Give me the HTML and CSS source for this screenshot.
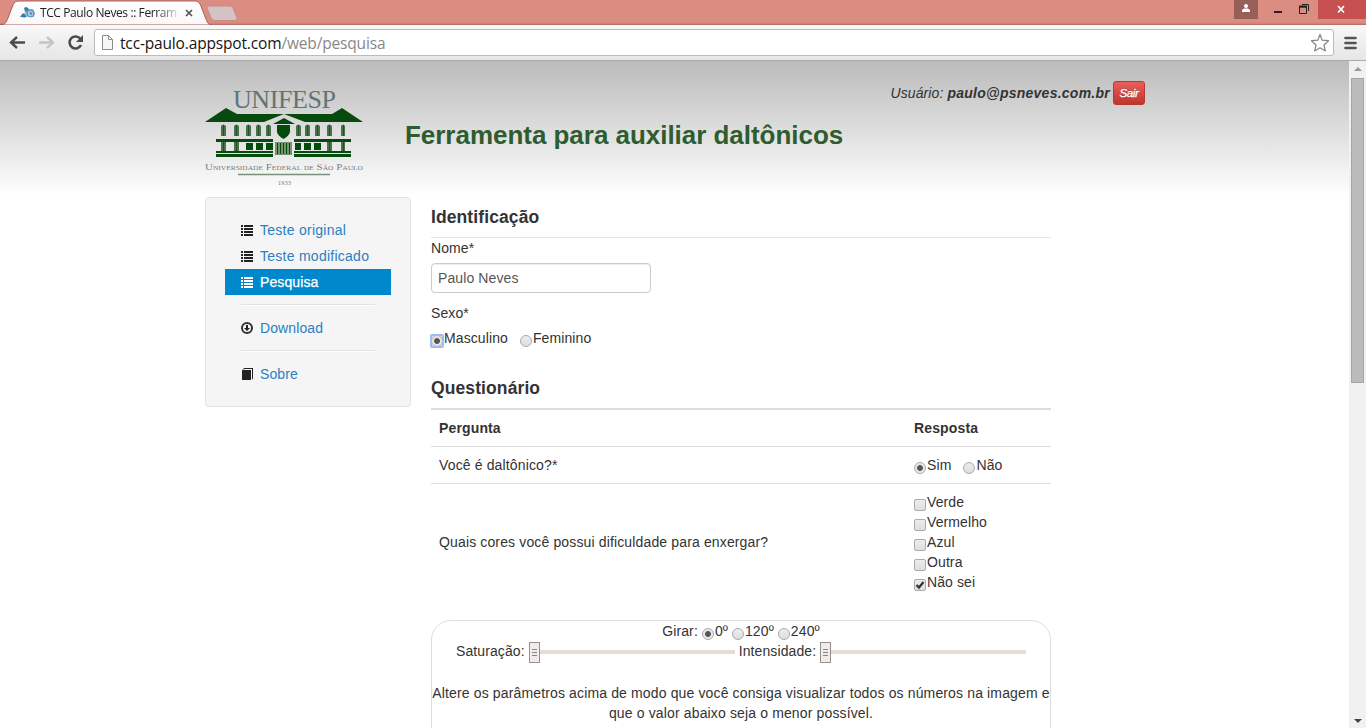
FILE: index.html
```html
<!DOCTYPE html>
<html lang="pt-BR">
<head>
<meta charset="utf-8">
<title>TCC Paulo Neves :: Ferramenta</title>
<link rel="stylesheet" href="styles.css">
</head>
<body>
<svg width="0" height="0" class="defs">
  <defs>
    <symbol id="list" viewBox="0 0 12 11"><path d="M0 0h2v2H0zM3 0h9v2H3zM0 3h2v2H0zM3 3h9v2H3zM0 6h2v2H0zM3 6h9v2H3zM0 9h2v2H0zM3 9h9v2H3z"/></symbol>
  </defs>
</svg>
<header class="browser">
  <div class="tabstrip">
    <svg class="tabs" width="250" height="25" viewBox="0 0 250 25">
      <defs><linearGradient id="tabfill" x2="0" y2="1"><stop offset="0" stop-color="#fff"/><stop offset="1" stop-color="#f9f8f8"/></linearGradient></defs>
      <path d="M0 25C5 25 6 23 8 18L13 5C14.500 2 16 1 19 1H194C198 1 199 2 200.500 5L206 19C207.500 23 208 24.500 212 25Z" fill="url(#tabfill)" stroke="#a6615a"/>
      <path d="M208.500 6H229Q232 6 233 8L237 18Q238 20.500 235 20.500H215Q212 20.500 211 18L207 8Q206.500 6 208.500 6Z" fill="#d4c3c5" stroke="#c98a82"/>
      <path d="M21 17L23 14L25 13L24 9L27 7L29 9L33 9L35 13L34 17H29L27 16L25 18Z" fill="#8bb9d8"/><path d="M20 17L23 13L27 17ZM24 8L26 7L29 9L26 12Z" fill="#3479aa"/><circle cx="30.500" cy="13.500" r="3.500" fill="#a5cbe2" stroke="#4e8ab4"/><circle cx="31" cy="13.500" r="1.300" fill="#4e8ab4"/>
      <path d="M186 10l6 6m0-6l-6 6" stroke="#555" stroke-width="1.700"/>
    </svg>
    <span class="tab-title">TCC Paulo Neves :: Ferram</span>
    <svg class="window-buttons" width="132" height="19" viewBox="0 0 132 19">
      <path fill="#985f59" d="M0 0h24v19H0z"/><circle cx="12" cy="6" r="2" fill="#fff"/><path d="M8 12V10L10 8.500H14L16 10V12Z" fill="#fff"/>
      <path fill="#2a2220" d="M40 11h8v2h-8z"/><path d="M65.500 7v6.500h7V7zM68 4.500h6.500V11" fill="none" stroke="#2a2220"/><path d="M65 6.500h8" stroke="#2a2220" stroke-width="2"/>
      <path fill="#c75050" d="M84 0h48v19H84z"/><path d="M104 6l6 6.500m0-6.500l-6 6.500" stroke="#fff" stroke-width="1.700"/>
    </svg>
  </div>
  <div class="toolbar">
    <svg class="nav-icons" width="94" height="35" viewBox="0 0 94 35" fill="none">
      <path d="M25 17.500H11M17 12L11 17.500L17 23" stroke="#4c4c4c" stroke-width="2.400"/>
      <path d="M39 17.500H53M47 12L53 17.500L47 23" stroke="#c5c5c5" stroke-width="2.400"/>
      <path d="M80.500 14A6 6 0 1 0 81 20" stroke="#4c4c4c" stroke-width="2.600"/><path d="M83 10V17H76Z" fill="#4c4c4c"/>
    </svg>
    <div class="address">
      <svg width="13" height="16" viewBox="0 0 13 16"><path d="M1.500 .5H7.500L11.500 4.500V14.500H1.500ZM7.500 .5V4.500H11.500" fill="#f7f7f7" stroke="#8b8b8b"/></svg>
      <span class="url"><b>tcc-paulo.appspot.com</b>/web/pesquisa</span>
      <svg class="star" width="20" height="20" viewBox="0 0 20 20"><path d="M10 1.500L12.200 7.200L18.500 7.700L14 12L15.300 18L10 14.800L4.700 18L6 12L1.500 7.700L7.800 7.200Z" fill="#fff" stroke="#858585" stroke-width="1.200" stroke-linejoin="round"/></svg>
    </div>
    <svg class="menu" width="13" height="14" viewBox="0 0 13 14"><path d="M1.500 2h10M1.500 7h10M1.500 12h10" stroke="#555" stroke-width="2.700" stroke-linecap="round"/></svg>
  </div>
</header>
<div class="viewport">
  <div class="page">
    <div class="container">
      <header class="banner">
        <svg class="logo" width="160" height="98" viewBox="205 89 160 98" font-family="Liberation Serif, serif">
          <text x="233" y="108" font-size="26" textLength="103" lengthAdjust="spacing" fill="#607573" class="wordmark">UNIFESP</text>
          <g fill="#064b0d">
            <path d="M205 122L226 108L237 114H332L342 108L363 122H305L284 114L264 122Z"/>
            <path d="M273 124L284 118L295 124ZM277 125H290V132Q289 136 283.500 139Q278 136 277 132Z"/>
            <path d="M216 139H273V142H216ZM294 139H351V142H294ZM216 151H273V157H216ZM294 151H351V157H294Z"/>
            <path d="M246 143h7v7h-7zM256 143h7v7h-7zM266 143h7v7h-7zM295 143h6v7h-6zM304 143h7v7h-7zM314 143h7v7h-7z"/>
          </g>
          <path d="M216 153.500H351M274 140.500H293" stroke="#e0e0e0"/><path d="M275 142H292V155H275Z" fill="#73946f"/>
          <path d="M277.500 143v11M280.500 143v11M283.500 143v11M286.500 143v11M289.500 143v11" stroke="#064b0d"/>
          <g fill="#477349"><path d="M221 136V126Q223 123 226 126V136ZM234 136V126Q236 123 239 126V136ZM246 136V126Q248 123 251 126V136ZM256 136V126Q258 123 261 126V136ZM266 136V126Q268 123 271 126V136ZM296 136V126Q298 123 301 126V136ZM305 136V126Q308 123 310 126V136ZM315 136V126Q317 123 320 126V136ZM327 136V126Q329 123 332 126V136ZM341 136V126Q343 123 345 126V136ZM221 142h5v9h-5zM234 142h5v9h-5zM327 142h5v9h-5zM341 142h4v9h-4z"/></g>
          <path d="M223.500 125v11m0 6v9M236.500 125v11m0 6v9M248.500 125v11M258.500 125v11M268.500 125v11M298.500 125v11M307.500 125v11M317.500 125v11M329.500 125v11m0 6v9M343.500 125v11m0 6v9" stroke="#244f2a"/>
          <text x="205" y="169.500" font-size="8.800" textLength="158" lengthAdjust="spacingAndGlyphs" fill="#747f7f" class="smallcaps">Universidade Federal de São Paulo</text>
          <path d="M238 174.500H330" stroke="#78917d" stroke-width="1.300"/>
          <text x="278" y="185" font-size="6" textLength="13" fill="#777">1933</text>
        </svg>
        <h1>Ferramenta para auxiliar daltônicos</h1>
        <div class="user">Usuário: <strong>paulo@psneves.com.br</strong><a class="exit">Sair</a></div>
      </header>
      <div class="columns">
        <nav class="sidebar">
          <a class="test"><svg width="12" height="11"><use href="#list"/></svg>Teste original</a>
          <a class="test"><svg width="12" height="11"><use href="#list"/></svg>Teste modificado</a>
          <a class="active"><svg width="12" height="11"><use href="#list"/></svg>Pesquisa</a>
          <hr>
          <a><svg width="12" height="12" viewBox="0 0 12 12"><circle cx="6" cy="6" r="5" fill="none" stroke="#333" stroke-width="2"/><path d="M5 3h2v3h2L6 9L3 6h2z"/></svg>Download</a>
          <hr>
          <a><svg width="12" height="12" viewBox="0 0 12 12"><path d="M1 2.500L3 0H12V10.500L11 11.500V1H3L2 2H10V12H1Z"/></svg>Sobre</a>
        </nav>
        <main>
          <h2 class="legend">Identificação</h2>
          <label>Nome*</label>
          <input class="name" value="Paulo Neves">
          <label>Sexo*</label>
          <div class="choices"><i class="radio on focus"></i><span>Masculino</span><i class="radio"></i><span>Feminino</span></div>
          <h2>Questionário</h2>
          <div class="table">
            <div class="row head"><span>Pergunta</span><span>Resposta</span></div>
            <div class="row"><span>Você é daltônico?*</span><div class="choices"><i class="radio on"></i><span>Sim</span><i class="radio"></i><span>Não</span></div></div>
            <div class="row tall"><span>Quais cores você possui dificuldade para enxergar?</span>
              <div>
                <div class="choices"><i class="check"></i><span>Verde</span></div>
                <div class="choices"><i class="check"></i><span>Vermelho</span></div>
                <div class="choices"><i class="check"></i><span>Azul</span></div>
                <div class="choices"><i class="check"></i><span>Outra</span></div>
                <div class="choices"><i class="check"><svg width="10" height="10" viewBox="0 0 10 10"><path d="M1.500 5L4 7.500L8.500 2" fill="none" stroke="#333" stroke-width="2.300"/></svg></i><span>Não sei</span></div>
              </div>
            </div>
          </div>
          <section class="panel">
            <div class="rotate"><span>Girar:</span><i class="radio on"></i><span>0º</span><i class="radio"></i><span>120º</span><i class="radio"></i><span>240º</span></div>
            <div class="sliders"><span class="sat">Saturação:</span><div class="slider"><i></i></div><span class="int">Intensidade:</span><div class="slider"><i></i></div></div>
            <p>Altere os parâmetros acima de modo que você consiga visualizar todos os números na imagem e<br>que o valor abaixo seja o menor possível.</p>
          </section>
        </main>
      </div>
    </div>
  </div>
  <aside class="scrollbar"><i class="arrow up"></i><div class="thumb"></div><i class="arrow down"></i></aside>
</div>
</body>
</html>
```
FILE: styles.css
```css
* { box-sizing: border-box; }
body { margin: 0; width: 1366px; height: 728px; overflow: hidden; background: #fff; color: #333; font: 14px/20px "Liberation Sans", Arial, sans-serif; letter-spacing: .1px; }
svg { display: block; flex: none; }
.defs { position: absolute; }
.browser { height: 61px; letter-spacing: 0; }
.tabstrip { position: relative; display: flex; justify-content: space-between; height: 25px; background: linear-gradient(#db8d82 0, #db8d82 22px, #cc8077 24px, #a6615a 25px); }
.tab-title { position: absolute; left: 40px; top: 3px; width: 144px; white-space: nowrap; font: 12px/20px "Open Sans", sans-serif; letter-spacing: -.4px; color: #222; -webkit-mask-image: linear-gradient(90deg, #000 80%, transparent 98%); mask-image: linear-gradient(90deg, #000 80%, transparent 98%); }
.toolbar { display: flex; height: 36px; background: linear-gradient(#f9f8f8, #e6e6e6); border-bottom: 1px solid #a9a9a9; }
.address { display: flex; align-items: center; width: 1240px; height: 27px; margin-top: 4px; padding: 0 3px 0 6px; background: #fff; border: 1px solid #bbb; border-radius: 3px; }
.url { margin-left: 6px; flex: 1; font: 15.5px/24px "Open Sans", sans-serif; letter-spacing: -.16px; color: #888; white-space: nowrap; }
.url b { font-weight: 400; color: #151515; }
.menu { margin: 11px 0 0 10px; }
.viewport { display: flex; height: 667px; }
.page { width: 1349px; overflow: hidden; background: linear-gradient(#bbb 0, #fff 135px); }
.container { width: 940px; margin-left: 205px; }
.banner { display: flex; height: 136px; }
.logo { margin-top: 28px; letter-spacing: 0; overflow: visible; }
.smallcaps { font-variant: small-caps; }
h1 { margin: 54px 0 0 40px; width: 460px; font-size: 26px; line-height: 40px; letter-spacing: -.03px; color: #2f5c2f; white-space: nowrap; }
.user { flex: 1; margin-top: 19px; display: flex; justify-content: flex-end; align-items: center; height: 26px; font-style: italic; white-space: pre; }
.user strong { letter-spacing: .25px; }
.exit { width: 32px; height: 24px; margin-left: 3px; border: 1px solid #bd362f; border-radius: 3px; background: linear-gradient(#e95f5b, #bd362f); color: #fff; font-size: 11.5px; line-height: 22px; text-align: center; letter-spacing: -.4px; text-shadow: 0 -1px rgba(0,0,0,.25); -webkit-text-stroke: .3px #fff; }
.columns { display: flex; gap: 20px; align-items: flex-start; }
.sidebar { width: 206px; height: 210px; padding: 19px; background: #f5f5f5; border: 1px solid #e3e3e3; border-radius: 4px; }
.sidebar a { display: flex; align-items: center; height: 26px; padding-left: 16px; color: #2a7fc1; }
.sidebar .test { letter-spacing: .26px; }
.sidebar a svg { margin-right: 7px; fill: #222; }
.sidebar .active { background: #08c; color: #fff; -webkit-text-stroke: .25px #fff; }
.sidebar .active svg { fill: #fff; }
.sidebar hr { height: 2px; margin: 9px 16px; border: 0; border-top: 1px solid #e2e2e2; background: #fff; }
main { width: 620px; padding-top: 5px; }
h2 { margin: 0; font-size: 17.5px; line-height: 30px; }
.legend { height: 36px; border-bottom: 1px solid #e5e5e5; }
label { display: block; height: 20px; }
.name { display: block; width: 220px; height: 30px; margin: 5px 0 10px; padding: 4px 6px; border: 1px solid #ccc; border-radius: 4px; color: #555; font: inherit; letter-spacing: inherit; box-shadow: inset 0 1px 1px rgba(0,0,0,.07); }
.choices { display: flex; height: 20px; white-space: nowrap; }
label + .choices { margin: 5px 0 25px; }
.choices span + .radio { margin-left: 12px; }
.radio, .check { flex: none; width: 12px; height: 12px; margin: 7px 1px 0 0; border: 1px solid #aaa; background: linear-gradient(#eee, #ddd); }
.radio { border-radius: 50%; }
.check { border-radius: 2px; }
.on { background: radial-gradient(circle, #555 0 2.500px, #e8e8e8 3.300px); }
.focus { box-shadow: 0 0 0 1px #d7e5fa; position: relative; }
.focus::before { content: ""; position: absolute; inset: -2px; border: 2px solid #9dbdf0; border-radius: 2px; }
.table { margin-top: 5px; border-top: 2px solid #ddd; }
.row { display: grid; grid-template-columns: 475px 1fr; align-items: center; padding: 8px 8px; height: 37px; border-bottom: 1px solid #ddd; }
.row > span { letter-spacing: .14px; }
.head { font-weight: 700; }
.tall { height: 116px; border: 0; }
.panel { height: 150px; margin-top: 20px; border: 1px solid #ddd; border-radius: 20px 20px 0 0; }
.rotate { display: flex; justify-content: center; height: 20px; }
.rotate .radio { margin-left: 4px; }
.sliders { display: flex; height: 20px; padding-left: 24px; align-items: center; }
.slider { width: 206px; height: 4px; margin: 2px 0 0 4px; background: #e3dcd7; }
.slider i { display: block; width: 11px; height: 21px; margin-top: -8px; border: 1px solid #96908c; background: linear-gradient(#8d8580, #8d8580) 2px 6px / 5px 1px no-repeat, linear-gradient(#8d8580, #8d8580) 2px 9px / 5px 1px no-repeat, linear-gradient(#8d8580, #8d8580) 2px 12px / 5px 1px no-repeat, #f1ecea; }
.int { margin-left: 4px; }
.panel p { margin: 22px -4px 0; text-align: center; white-space: nowrap; letter-spacing: .14px; }
.scrollbar { display: flex; flex-direction: column; align-items: center; width: 17px; background: #f1f1f1; }
.thumb { width: 13px; height: 305px; margin-top: 7px; background: #bbb; border: 1px solid #a5a5a5; }
.arrow { border: 4px solid transparent; }
.up { margin-top: 2px; border-bottom-color: #999; }
.down { margin: auto 0 1px; border-top-color: #444; }
```
